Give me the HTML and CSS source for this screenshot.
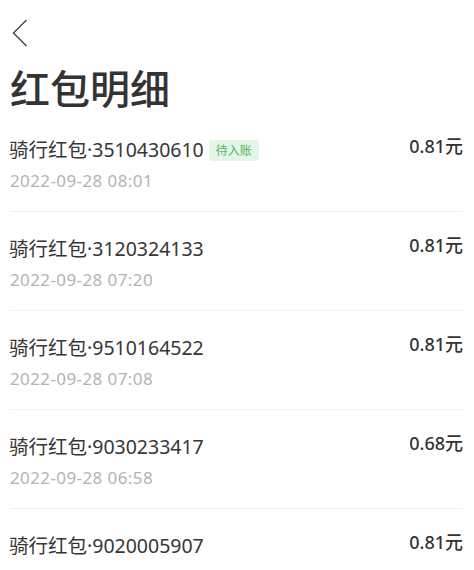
FILE: index.html
```html
<!DOCTYPE html>
<html lang="zh-CN">
<head>
    <meta charset="UTF-8">
    <meta name="viewport" content="width=device-width, initial-scale=1.0">
    <title>红包明细</title>
    <link rel="stylesheet" href="styles.css">
</head>
<body>
    <div class="page">
        <div class="nav">
            <svg class="back" width="16" height="28" viewBox="0 0 16 28">
                <polyline points="14.5,1 1.5,14 14.5,27" fill="none" stroke="#444" stroke-width="1.4"/>
            </svg>
        </div>
        <h1 class="title">红包明细</h1>
        <ul class="list">
            <li class="item">
                <div class="info">
                    <div class="name">骑行红包·3510430610<span class="tag">待入账</span></div>
                    <div class="date">2022-09-28 08:01</div>
                </div>
                <div class="amount">0.81元</div>
            </li>
            <li class="item">
                <div class="info">
                    <div class="name">骑行红包·3120324133</div>
                    <div class="date">2022-09-28 07:20</div>
                </div>
                <div class="amount">0.81元</div>
            </li>
            <li class="item">
                <div class="info">
                    <div class="name">骑行红包·9510164522</div>
                    <div class="date">2022-09-28 07:08</div>
                </div>
                <div class="amount">0.81元</div>
            </li>
            <li class="item">
                <div class="info">
                    <div class="name">骑行红包·9030233417</div>
                    <div class="date">2022-09-28 06:58</div>
                </div>
                <div class="amount">0.68元</div>
            </li>
            <li class="item">
                <div class="info">
                    <div class="name">骑行红包·9020005907</div>
                    <div class="date">2022-09-28 06:38</div>
                </div>
                <div class="amount">0.81元</div>
            </li>
        </ul>
    </div>
</body>
</html>
```

FILE: styles.css
```css
body { margin: 0; background: #fff; font-family: "Noto Sans", "Noto Sans CJK SC", sans-serif; color: #333; overflow: hidden; }
.page { padding: 0 11px 0 10px; }
.nav { padding-top: 19px; height: 28px; }
.back { display: block; margin-left: 2px; }
.title { margin: 18px 0 0; font-size: 40px; line-height: 48px; font-weight: 500; color: #333; }
.list { list-style: none; margin: 0; padding: 0; }
.item { display: flex; justify-content: space-between; align-items: flex-start; padding: 24px 0 20px; border-bottom: 1px solid #f0f0f0; }
.name { display: flex; align-items: center; font-size: 19.5px; line-height: 26px; color: #363636; margin-left: -1px; }
.tag { margin-left: 5px; padding: 0 7px; height: 21px; line-height: 21px; font-size: 12px; color: #55b565; background: #e4f6e7; border-radius: 3px; }
.date { margin-top: 8px; font-size: 17px; line-height: 20px; letter-spacing: 0.4px; color: #b3b3b3; }
.amount { font-size: 18px; line-height: 18px; font-weight: 500; color: #333; }
```
